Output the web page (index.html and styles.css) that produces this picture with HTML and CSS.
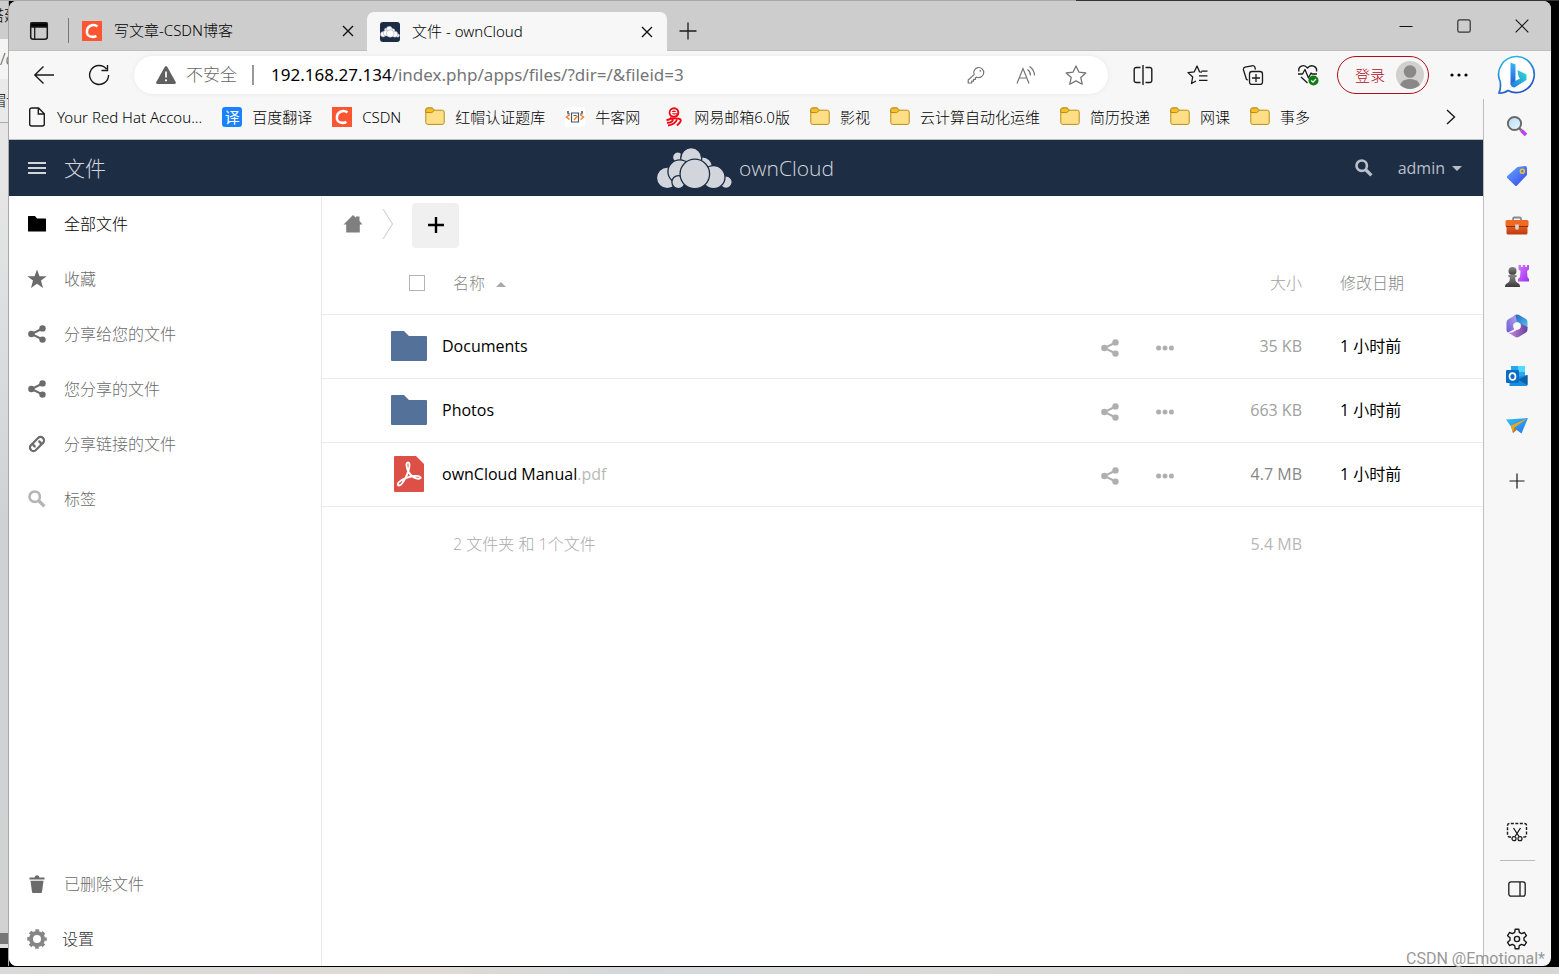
FILE: index.html
```html
<!DOCTYPE html>
<html lang="zh-CN">
<head>
<meta charset="utf-8">
<title>文件 - ownCloud</title>
<link rel="stylesheet" href="styles.css">
</head>
<body>
<svg class="defs" aria-hidden="true">
  <defs>
    <linearGradient id="g-bing-ring" x1="0" y1="0" x2="0.4" y2="1"><stop offset="0" stop-color="#2bc4ee"/><stop offset="1" stop-color="#2457c9"/></linearGradient>
    <linearGradient id="g-bing-a" x1="0" y1="0" x2="0" y2="1"><stop offset="0" stop-color="#3cb6f4"/><stop offset="1" stop-color="#1e5bd8"/></linearGradient>
    <linearGradient id="g-bing-b" x1="1" y1="0" x2="0" y2="1"><stop offset="0" stop-color="#2fe0d0"/><stop offset="1" stop-color="#1f74e6"/></linearGradient>
    <linearGradient id="g-lens" x1="0" y1="0" x2="1" y2="1"><stop offset="0" stop-color="#b9dcf5"/><stop offset="1" stop-color="#e6f6ff"/></linearGradient>
    <linearGradient id="g-tag" x1="0" y1="0" x2="1" y2="1"><stop offset="0" stop-color="#5fb0ff"/><stop offset="1" stop-color="#3b3df0"/></linearGradient>
    <linearGradient id="g-box" x1="0" y1="0" x2="0" y2="1"><stop offset="0" stop-color="#e85c1a"/><stop offset="1" stop-color="#b83a12"/></linearGradient>
    <linearGradient id="g-pawn" x1="0" y1="0" x2="0" y2="1"><stop offset="0" stop-color="#8a8a8a"/><stop offset="1" stop-color="#3a3a3a"/></linearGradient>
    <linearGradient id="g-rook" x1="0" y1="0" x2="1" y2="1"><stop offset="0" stop-color="#d67bff"/><stop offset="1" stop-color="#a02cf0"/></linearGradient>
    <linearGradient id="g-m1" x1="0" y1="1" x2="1" y2="0"><stop offset="0" stop-color="#6a5bd6"/><stop offset="1" stop-color="#b9a2ee"/></linearGradient>
    <linearGradient id="g-m2" x1="0" y1="0" x2="1" y2="1"><stop offset="0" stop-color="#1f5fc0"/><stop offset="1" stop-color="#55c6f2"/></linearGradient>
    <linearGradient id="g-m3" x1="0" y1="0" x2="1" y2="0"><stop offset="0" stop-color="#c58be0"/><stop offset="1" stop-color="#6b3f9c"/></linearGradient>
    <linearGradient id="g-drop" x1="0" y1="0" x2="1" y2="1"><stop offset="0" stop-color="#2ec5f2"/><stop offset="1" stop-color="#2a6ff0"/></linearGradient>
  </defs>
  <symbol id="i-folder" viewBox="0 0 20 20"><path d="M.8 4V15.500A2 2 0 0 0 2.800 17.400H17.200A2 2 0 0 0 19.200 15.500V5.200A2 2 0 0 0 17.200 3.200H9.200L7.800 1.500A1.500 1.500 0 0 0 6.800 1H2.600A1.800 1.800 0 0 0 .8 2.800Z" fill="#ffdf85" stroke="#b98c14"/><path d="M.8 5.500V2.800A1.800 1.800 0 0 1 2.600 1H6.800Q7.500 1 8 1.700L9.200 3.200L7.700 5Q7.300 5.600 6.500 5.600Z" fill="#f2c12e" stroke="#b98c14"/></symbol>
  <symbol id="i-csdn" viewBox="0 0 20 20"><path d="M0 0H20V20H0Z" fill="#fc5531"/><path d="M15.400 5.400C13.600 3.900 10.400 3.700 8 5C4.700 6.800 4 11.600 5.900 14C7.800 16.200 11.700 16.400 14.400 14.800" fill="none" stroke="#fff" stroke-width="2.600"/></symbol>
  <symbol id="i-cloud" viewBox="0 0 232 128"><g fill="#d2d6dc" stroke="#1d2d44" stroke-width="4"><circle cx="65" cy="31" r="16"/><circle cx="140" cy="61" r="31"/><circle cx="106" cy="34" r="32"/><circle cx="33" cy="94" r="33"/><circle cx="71" cy="75" r="36"/><circle cx="67" cy="107" r="20"/><circle cx="212" cy="107" r="19"/><circle cx="174" cy="92" r="35"/><circle cx="117" cy="82" r="45"/></g></symbol>
  <symbol id="i-cloud-small" viewBox="0 0 20 12"><g fill="#fff" stroke="#8d96a5" stroke-width=".5"><circle cx="6" cy="3.500" r="1.500"/><circle cx="12.500" cy="5" r="2.500"/><circle cx="9.300" cy="3.200" r="2.900"/><circle cx="3.200" cy="8.300" r="2.700"/><circle cx="6.300" cy="7" r="3"/><circle cx="17.800" cy="9.500" r="1.700"/><circle cx="14.800" cy="8.200" r="3"/><circle cx="10.200" cy="7.500" r="3.800"/></g></symbol>
  <symbol id="i-share" viewBox="0 0 18 18"><path d="M14.500 3.500L3.500 9L14.500 14.500" fill="none" stroke="currentColor" stroke-width="2"/><circle cx="3.400" cy="9" r="3.200" fill="currentColor"/><circle cx="14.500" cy="3.400" r="3.200" fill="currentColor"/><circle cx="14.500" cy="14.600" r="3.200" fill="currentColor"/></symbol>
  <symbol id="i-search" viewBox="0 0 18 18"><circle cx="6.700" cy="6.700" r="5.200" fill="none" stroke="currentColor" stroke-width="2.600"/><path d="M10.500 10.500L16.400 16.400" stroke="currentColor" stroke-width="3.300"/></symbol>
  <symbol id="i-dots" viewBox="0 0 18 6"><g fill="currentColor"><circle cx="2.600" cy="3" r="2.500"/><circle cx="9" cy="3" r="2.500"/><circle cx="15.400" cy="3" r="2.500"/></g></symbol>
  <symbol id="i-bigfolder" viewBox="0 0 36 30"><path d="M1 0H13L18 5H35Q36 5 36 6V29Q36 30 35 30H1Q0 30 0 29V1Q0 0 1 0Z" fill="#54719a"/></symbol>
</svg>

<div class="desktop">
  <div class="behind" aria-hidden="true">
    <div class="behind-tab">搭建</div>
    <div class="behind-url">/d</div>
    <div class="behind-marks">帽认</div>
    <div class="behind-page"></div>
    <div class="behind-bar"></div>
    <div class="behind-task"></div>
  </div>

  <div class="window">
    <header class="titlebar">
      <button class="tab-actions" aria-label="标签页操作"><svg width="20" height="20" viewBox="0 0 20 20"><rect x="1.700" y="1.700" width="16.600" height="16.600" rx="2.500" fill="none" stroke="#1a1a1a" stroke-width="1.500"/><path d="M2 2H18V6H2ZM5.700 6V18" stroke="#1a1a1a" stroke-width="1.300"/></svg></button>
      <div class="tab">
        <svg width="20" height="20"><use href="#i-csdn"/></svg>
        <span class="tab-title">写文章-CSDN博客</span>
        <button class="tab-close" aria-label="关闭"><svg width="12" height="12" viewBox="0 0 12 12"><path d="M1 1L11 11M11 1L1 11" stroke="#111" stroke-width="1.400"/></svg></button>
      </div>
      <div class="tab tab-active">
        <span class="oc-favicon"><svg width="20" height="12"><use href="#i-cloud-small"/></svg></span>
        <span class="tab-title">文件 - ownCloud</span>
        <button class="tab-close" aria-label="关闭"><svg width="12" height="12" viewBox="0 0 12 12"><path d="M1 1L11 11M11 1L1 11" stroke="#111" stroke-width="1.400"/></svg></button>
      </div>
      <button class="new-tab" aria-label="新建标签页"><svg width="18" height="18" viewBox="0 0 18 18"><path d="M9 .5V17.500M.5 9H17.500" stroke="#1a1a1a" stroke-width="1.300"/></svg></button>
      <div class="window-buttons">
        <button aria-label="最小化"><svg width="14" height="14" viewBox="0 0 14 14"><path d="M.5 7.500H13.500" stroke="#111"/></svg></button>
        <button aria-label="最大化"><svg width="14" height="14" viewBox="0 0 14 14"><rect x=".8" y=".8" width="12.400" height="12.400" rx="1.800" fill="none" stroke="#333" stroke-width="1.200"/></svg></button>
        <button aria-label="关闭窗口"><svg width="14" height="14" viewBox="0 0 14 14"><path d="M.7 .7L13.300 13.300M13.300 .7L.7 13.300" stroke="#111" stroke-width="1.100"/></svg></button>
      </div>
    </header>

    <div class="window-body">
      <div class="main-column">
        <div class="toolbar">
          <button class="tool nav" aria-label="后退"><svg width="22" height="20" viewBox="0 0 22 20"><path d="M21 10H2M10.500 1.500L1.800 10L10.500 18.500" fill="none" stroke="#1a1a1a" stroke-width="1.400"/></svg></button>
          <button class="tool nav" aria-label="刷新"><svg width="22" height="22" viewBox="0 0 22 22"><path d="M20.600 11A9.500 9.500 0 1 1 18.500 5M19.500 1V6.500H13.500" fill="none" stroke="#1a1a1a" stroke-width="1.400"/></svg></button>
          <form class="omnibox">
            <svg class="warn" width="20" height="18" viewBox="0 0 20 18"><path d="M8.700 .9Q10 -.7 11.300 .9L19.700 16Q20.200 18 18.500 18H1.500Q-.2 18 .3 16Z" fill="#606060"/><path d="M10 5.500V11.500" stroke="#fff" stroke-width="1.700"/><circle cx="10" cy="14.300" r="1.100" fill="#fff"/></svg>
            <span class="insecure">不安全</span>
            <span class="url-divider"></span>
            <span class="url"><b>192.168.27.134</b>/index.php/apps/files/?dir=/&amp;fileid=3</span>
            <button type="button" class="tool" aria-label="密码"><svg width="18" height="18" viewBox="0 0 18 18"><path d="M7.200 8.600A5 5 0 1 1 10 11.200L8.500 11.600V13.300H6.500V15.200H4.700V17H1.200V14Z" fill="none" stroke="#757575" stroke-width="1.200" stroke-linejoin="round"/><circle cx="13.300" cy="4.800" r=".9" fill="#757575"/></svg></button>
            <button type="button" class="tool" aria-label="朗读"><svg width="20" height="18" viewBox="0 0 20 18"><path d="M1 17.500L7 2.500L13 17.500M3.200 12H10.800M11.500 3.500A7 7 0 0 1 14.500 9.500M13.500 .5A11 11 0 0 1 18.500 9.500" fill="none" stroke="#757575" stroke-width="1.200"/></svg></button>
            <button type="button" class="tool" aria-label="收藏"><svg width="22" height="20" viewBox="0 0 22 20"><path d="M11 1L14 7.200L20.800 8L15.800 12.600L17.200 19.200L11 15.900L4.800 19.200L6.200 12.600L1.200 8L8 7.200Z" fill="none" stroke="#757575" stroke-width="1.300" stroke-linejoin="round"/></svg></button>
          </form>
          <button class="tool split" aria-label="拆分窗口"><svg width="20" height="20" viewBox="0 0 20 20"><path d="M7.500 2.500H3.500A2 2 0 0 0 1.200 4.700V15.300A2 2 0 0 0 3.500 17.500H7.500M12.500 2.500H16.500A2 2 0 0 1 18.800 4.700V15.300A2 2 0 0 1 16.500 17.500H12.500M10 0V20" fill="none" stroke="#1a1a1a" stroke-width="1.400"/></svg></button>
          <button class="tool wide" aria-label="收藏夹"><svg width="22" height="20" viewBox="0 0 22 20"><path d="M15 7.200L12.500 6.800L10 1L7.300 6.800L1 7.600L5.700 12L4.500 18.500L9 16M12 10.800H20.500M14.500 6.200H20.500M12 15.400H20.500" fill="none" stroke="#1a1a1a" stroke-width="1.300" stroke-linejoin="round"/></svg></button>
          <button class="tool wide" aria-label="集锦"><svg width="22" height="20" viewBox="0 0 22 20"><rect x="7.500" y="6.500" width="13" height="13" rx="2.500" fill="none" stroke="#1a1a1a" stroke-width="1.300"/><path d="M14 9V17M10 13H18M6 15L4.500 14.500L1.500 5Q1 3 3 2.200L10 .8Q12 .4 12.800 2L13.500 4.500" fill="none" stroke="#1a1a1a" stroke-width="1.300"/></svg></button>
          <button class="tool wide" aria-label="浏览器概要"><svg width="22" height="22" viewBox="0 0 22 22"><path d="M2 7.500C.5 2.500 7-.5 10.500 4C14-.5 20.500 2.500 19.500 7.500M1 10H5.500L8 5.500L11.500 14L14 9L15 10H20M4 13L10.500 19" fill="none" stroke="#1a1a1a" stroke-width="1.300" stroke-linejoin="round"/><circle cx="16.500" cy="16.500" r="5" fill="#107c10"/><path d="M14.200 16.500L16 18.200L19 15" fill="none" stroke="#fff" stroke-width="1.300"/></svg></button>
          <button class="login">登录<svg width="28" height="28" viewBox="0 0 28 28"><circle cx="14" cy="14" r="14" fill="#d2d0ce"/><circle cx="14" cy="10.500" r="6.300" fill="#8a8886"/><path d="M4 24Q6 18 14 18T24 24Q19 28 14 28T4 24Z" fill="#8a8886"/></svg></button>
          <button class="tool more" aria-label="设置及其他"><svg width="18" height="4" viewBox="0 0 18 4"><circle cx="2" cy="2" r="1.600"/><circle cx="9" cy="2" r="1.600"/><circle cx="16" cy="2" r="1.600"/></svg></button>
        </div>

        <nav class="bookmarks" aria-label="收藏夹栏">
          <a href="#"><svg width="20" height="20" viewBox="0 0 20 20"><path d="M4.500 1H11.500L17.300 6.800V17A2 2 0 0 1 15.300 19H4.700A2 2 0 0 1 2.700 17V3A2 2 0 0 1 4.700 1ZM11.300 1V7H17.300" fill="none" stroke="#1a1a1a" stroke-width="1.400"/></svg>Your Red Hat Accou...</a>
          <a href="#"><span class="fanyi">译</span>百度翻译</a>
          <a href="#"><svg width="20" height="20"><use href="#i-csdn"/></svg>CSDN&nbsp;</a>
          <a href="#"><svg width="20" height="20"><use href="#i-folder"/></svg>红帽认证题库</a>
          <a href="#"><svg width="20" height="20" viewBox="0 0 20 20"><rect width="20" height="20" rx="2" fill="#fff"/><path d="M6.500 6H13.500V15H6.500ZM3 4V7H5M17 4V7H15M2 5H4M16 5H18M8.500 8.500H11.500" fill="none" stroke="#4a5668" stroke-width="1.200"/><path d="M4.500 8L1.500 10L4.500 12.500M15.500 8L18.500 10L15.500 12.500M12.500 9L9 13" fill="none" stroke="#ff7a1a" stroke-width="1.500"/></svg>牛客网&nbsp;</a>
          <a href="#"><svg width="20" height="20" viewBox="0 0 20 20"><circle cx="10" cy="5.500" r="5.300" fill="#f00a14"/><path d="M7 5.700H12.800Q12.600 2.800 10 2.800T7 5.500Q7.200 8.200 10 8.200L12.300 7.500" fill="none" stroke="#fff" stroke-width="1.200"/><path d="M2.500 13Q6 13 7.500 10.500M6 11.700Q15 10.800 16.500 12.500T13 18.500M9 12.500Q8 16 3 15.800M13 12.500Q11 17.500 4 18.500" fill="none" stroke="#f00a14" stroke-width="1.900"/></svg>网易邮箱6.0版</a>
          <a href="#"><svg width="20" height="20"><use href="#i-folder"/></svg>影视</a>
          <a href="#"><svg width="20" height="20"><use href="#i-folder"/></svg>云计算自动化运维</a>
          <a href="#"><svg width="20" height="20"><use href="#i-folder"/></svg>简历投递</a>
          <a href="#"><svg width="20" height="20"><use href="#i-folder"/></svg>网课</a>
          <a href="#"><svg width="20" height="20"><use href="#i-folder"/></svg>事多</a>
          <button class="overflow" aria-label="更多收藏"><svg width="10" height="16" viewBox="0 0 10 16"><path d="M1 1L8.500 8L1 15" fill="none" stroke="#1a1a1a" stroke-width="1.400"/></svg></button>
        </nav>

        <div class="app">
          <header class="app-header">
            <button class="app-menu"><svg width="18" height="14" viewBox="0 0 18 14"><path d="M0 2H18M0 7H18M0 12H18" stroke="currentColor" stroke-width="2"/></svg>文件</button>
            <a class="brand" href="#"><svg width="77" height="42"><use href="#i-cloud"/></svg>ownCloud</a>
            <div class="app-user">
              <button aria-label="搜索"><svg width="18" height="18"><use href="#i-search"/></svg></button>
              <button>admin<svg width="10" height="5" viewBox="0 0 10 5"><path d="M0 0H10L5 5Z" fill="currentColor"/></svg></button>
            </div>
          </header>

          <div class="app-body">
            <nav class="side">
              <a class="current" href="#"><svg width="20" height="20" viewBox="0 0 20 20"><path d="M1.500 2H8L10 4.500H18.500Q19 4.500 19 5V17.500H1V2.500Z" fill="currentColor"/></svg>全部文件</a>
              <a href="#"><svg width="20" height="20" viewBox="0 0 20 20"><path d="M10 .5L12.500 7.200H19.700L14 11.600L16 19L10 14.800L4 19L6 11.600L.3 7.200H7.500Z" fill="currentColor"/></svg>收藏</a>
              <a href="#"><svg width="20" height="18"><use href="#i-share"/></svg>分享给您的文件</a>
              <a href="#"><svg width="20" height="18"><use href="#i-share"/></svg>您分享的文件</a>
              <a href="#"><svg width="20" height="20" viewBox="0 0 20 20"><g transform="rotate(-45 10 10)" fill="none" stroke="currentColor" stroke-width="2.200"><path d="M8 6.500H15A3.500 3.500 0 0 1 15 13.500H12M8 6.500A3.500 3.500 0 0 0 7 11"/><path d="M12 13.500H5A3.500 3.500 0 0 1 5 6.500H8M12 13.500A3.500 3.500 0 0 0 13 9" /></g></svg>分享链接的文件</a>
              <a href="#"><svg class="faint" width="20" height="18"><use href="#i-search"/></svg>标签</a>
              <a class="trash" href="#"><svg width="20" height="20" viewBox="0 0 20 20"><path d="M2.500 3.500H7.500Q8 1.200 10 1.200T12.500 3.500H17.500V5.500H2.500ZM3.500 6.800H16.500L15 18Q14.900 19 14 19H6Q5.100 19 5 18Z" fill="currentColor"/></svg>已删除文件</a>
              <button class="settings"><svg width="20" height="20" viewBox="0 0 20 20"><circle cx="10" cy="10" r="6" fill="none" stroke="#858585" stroke-width="4"/><circle cx="10" cy="10" r="8.600" fill="none" stroke="#858585" stroke-width="2.400" stroke-dasharray="3.700 3.054" stroke-dashoffset="1.850"/></svg>设置</button>
            </nav>

            <main class="files">
              <div class="crumbs">
                <a href="#" aria-label="主页"><svg width="20" height="18" viewBox="0 0 20 18"><path d="M10 0L13 2.700V1.500H16.500V6L19.500 9.500H16.800V17.500H3.200V9.500H.5Z" fill="#7f7f7f"/></svg></a>
                <svg class="chevron" width="12" height="32" viewBox="0 0 12 32"><path d="M1 1L10.500 16L1 31" fill="none" stroke="#d4d4d4" stroke-width="1.200"/></svg>
                <button class="add" aria-label="新建"><svg width="16" height="16" viewBox="0 0 16 16"><path d="M8 0V16M0 8H16" stroke="#000" stroke-width="2.400"/></svg></button>
              </div>
              <table>
                <colgroup><col class="c-icon"><col><col class="c-act"><col class="c-act"><col class="c-size"><col class="c-date"></colgroup>
                <thead>
                  <tr><th class="t-check"><input type="checkbox" aria-label="全选"></th><th class="t-name">名称<svg width="10" height="5" viewBox="0 0 10 5"><path d="M0 5H10L5 0Z" fill="#aaa"/></svg></th><th></th><th></th><th class="t-size">大小</th><th class="t-date">修改日期</th></tr>
                </thead>
                <tbody>
                  <tr><td class="t-icon"><svg width="36" height="30"><use href="#i-bigfolder"/></svg></td><td><a href="#">Documents</a></td><td class="t-act"><button aria-label="分享"><svg width="18" height="18"><use href="#i-share"/></svg></button></td><td class="t-act"><button aria-label="更多"><svg width="18" height="6"><use href="#i-dots"/></svg></button></td><td class="t-size">35 KB</td><td class="t-date">1 小时前</td></tr>
                  <tr><td class="t-icon"><svg width="36" height="30"><use href="#i-bigfolder"/></svg></td><td><a href="#">Photos</a></td><td class="t-act"><button aria-label="分享"><svg width="18" height="18"><use href="#i-share"/></svg></button></td><td class="t-act"><button aria-label="更多"><svg width="18" height="6"><use href="#i-dots"/></svg></button></td><td class="t-size">663 KB</td><td class="t-date">1 小时前</td></tr>
                  <tr><td class="t-icon"><svg width="36" height="36" viewBox="0 0 36 36"><path d="M4 0H25L33 8V35Q33 36 32 36H4Q3 36 3 35V1Q3 0 4 0Z" fill="#dc5047"/><path d="M17 6.500C14.500 6.500 15.600 12 17.300 15.500C20 21 25.500 23.200 28.500 22.600C31.500 21.500 28.500 19.500 23.500 20C18 20.500 10.500 23 7.500 26.500C5.500 29.500 8.500 31 11 27.500C14.500 22.500 17.500 16 18.300 11C18.700 8 18.500 6.500 17 6.500Z" fill="none" stroke="#fff" stroke-width="1.900"/></svg></td><td><a href="#">ownCloud Manual<span class="ext">.pdf</span></a></td><td class="t-act"><button aria-label="分享"><svg width="18" height="18"><use href="#i-share"/></svg></button></td><td class="t-act"><button aria-label="更多"><svg width="18" height="6"><use href="#i-dots"/></svg></button></td><td class="t-size dark">4.7 MB</td><td class="t-date">1 小时前</td></tr>
                </tbody>
                <tfoot>
                  <tr><td></td><td class="t-name">2 文件夹 和 1个文件</td><td></td><td></td><td class="t-size total">5.4 MB</td><td></td></tr>
                </tfoot>
              </table>
            </main>
          </div>
        </div>
      </div>

      <aside class="edge-side">
        <button class="bing" aria-label="必应"><svg width="40" height="40" viewBox="0 0 40 40"><path d="M20 1.500A18 18 0 1 1 11 35.500Q7 38.700 2 38Q4 34 3.300 27A18 18 0 0 1 20 1.500Z" fill="#fff" stroke="url(#g-bing-ring)" stroke-width="1.700"/><path d="M13.500 7.500L18.500 9.500V27L13.500 30Z" fill="url(#g-bing-a)"/><path d="M20.500 15L29.500 19.500V25L17.500 32.500Q14 32.500 13.500 28.500L23 23.500L21.500 21.500Z" fill="url(#g-bing-b)"/></svg></button>
        <div class="rail">
          <button aria-label="搜索"><svg width="22" height="22" viewBox="0 0 22 22"><path d="M13 13L15.500 15.500" stroke="#777" stroke-width="2.500"/><path d="M15.500 15.500L20 20" stroke="#c43cf0" stroke-width="3.600"/><circle cx="8.500" cy="8.500" r="6.600" fill="url(#g-lens)" stroke="#6a6a6a" stroke-width="2"/></svg></button>
          <button aria-label="购物"><svg width="22" height="22" viewBox="0 0 22 22"><path d="M11.500 2L19 1Q21 1 21 3L21 10L11 20.500Q10 21.500 9 20.500L1.200 13Q.5 12 1.300 11Z" fill="url(#g-tag)"/><circle cx="16.300" cy="6.300" r="2" fill="#5a70e8" stroke="#f3c623" stroke-width="1.500"/></svg></button>
          <button aria-label="工具"><svg width="24" height="20" viewBox="0 0 24 20"><path d="M8 5V3Q8 1.500 9.500 1.500H14.500Q16 1.500 16 3V5" fill="none" stroke="#8a8a8a" stroke-width="1.800"/><rect x=".5" y="4" width="23" height="7" rx="1.500" fill="#ee6a22"/><path d="M1.500 10.500H22.500V17Q22.500 18.500 21 18.500H3Q1.500 18.500 1.500 17Z" fill="url(#g-box)"/><path d="M1 10.500H23" stroke="#8f2d10"/><path d="M10.200 8.500H13.800V12Q13.800 13.800 12 13.800T10.200 12Z" fill="#d6d6d6"/></svg></button>
          <button aria-label="游戏"><svg width="24" height="24" viewBox="0 0 24 24"><path d="M13.500 1H16V3H17.700V1H20.300V3H22V1H24V5.500L22 7L22.500 13L24 15V17.500H13V15L15 13L15.500 7L13.500 5.500Z" fill="url(#g-rook)"/><circle cx="7.500" cy="7" r="4" fill="url(#g-pawn)"/><path d="M3 11.500Q7.500 9.500 12 11.500Q12 13 10 13.500Q10 17 12 18.500Q15.500 20 15 23H0Q-.3 20 3.300 18.500Q5 17 5 13.500Q3 13 3 11.500Z" fill="url(#g-pawn)"/></svg></button>
          <button aria-label="Microsoft 365"><svg width="22" height="24" viewBox="0 0 22 24"><path d="M9 1Q11 0 13 1L20 5Q21.500 6 21.500 8V14L14.500 10L11 8.300L7.500 10.500V3Z" fill="url(#g-m2)"/><path d="M9.500 1L2 5.500Q.5 6.500 .5 8.500V16Q.5 17.500 2 18.500L8 15.500L7.500 10L11 8Z" fill="url(#g-m1)"/><path d="M21.500 13V15.500Q21.500 17.500 20 18.500L13 22.800Q11 24 9 22.800L2 18.500Q6 19.500 9 17L14.500 13.500L14.500 9.500Z" fill="url(#g-m3)"/><circle cx="11" cy="12" r="3.700" fill="#f7f7f7"/></svg></button>
          <button aria-label="Outlook"><svg width="22" height="22" viewBox="0 0 22 22"><path d="M5 1H19V12H5Z" fill="#28a8ea"/><path d="M12 1H19V7H12Z" fill="#50d9ff"/><path d="M5 7H12V12H5Z" fill="#0364b8"/><path d="M3.500 21V13L21.500 10V19.500Q21.500 21 20 21Z" fill="#1490df"/><path d="M21.500 10V20L12 14.500Z" fill="#0f5ea8"/><rect x="0" y="5" width="13" height="13" rx="1.200" fill="#0b6cc4"/><ellipse cx="6.500" cy="11.500" rx="3" ry="3.400" fill="none" stroke="#fff" stroke-width="1.700"/></svg></button>
          <button aria-label="Drop"><svg width="22" height="18" viewBox="0 0 22 18"><path d="M0 2.500L22 1L15.500 16.500L10 12.500L7 16L5 9.500Z" fill="url(#g-drop)"/><path d="M5 8.500L22 1L8.500 10.500L7 16Z" fill="#f2a51c"/><path d="M7 16L8.500 10.500L11 12.800Z" fill="#c97708"/></svg></button>
          <button class="rail-add" aria-label="添加"><svg width="16" height="16" viewBox="0 0 16 16"><path d="M8 .5V15.500M.5 8H15.500" stroke="#1a1a1a" stroke-width="1.200"/></svg></button>
          <span class="rail-space"></span>
          <button aria-label="截图"><svg width="22" height="20" viewBox="0 0 22 20"><path d="M5 15H3.500A2 2 0 0 1 1.500 13V3.500A2 2 0 0 1 3.500 1.500H18.500A2 2 0 0 1 20.500 3.500V13A2 2 0 0 1 18.500 15H17" fill="none" stroke="#1a1a1a" stroke-width="1.400" stroke-dasharray="3 1.500"/><path d="M7.500 6L13 14.500M14.500 6L9 14.500" stroke="#1a1a1a" stroke-width="1.300"/><circle cx="8" cy="16.700" r="2" fill="none" stroke="#1a1a1a" stroke-width="1.200"/><circle cx="14" cy="16.700" r="2" fill="none" stroke="#1a1a1a" stroke-width="1.200"/></svg></button>
          <hr>
          <button aria-label="侧栏"><svg width="18" height="16" viewBox="0 0 18 16"><rect x=".8" y=".8" width="16.400" height="14.400" rx="2.200" fill="none" stroke="#1a1a1a" stroke-width="1.300"/><path d="M12 1V15" stroke="#1a1a1a" stroke-width="1.300"/></svg></button>
          <button aria-label="设置"><svg width="22" height="22" viewBox="0 0 22 22"><path d="M8.700 4.300L9.200 1.200H12.800L13.300 4.300L15.600 5.600L18.500 4.500L20.400 7.700L18 9.700V12.300L20.400 14.300L18.500 17.500L15.600 16.400L13.300 17.700L12.800 20.800H9.200L8.700 17.700L6.400 16.400L3.500 17.500L1.600 14.300L4 12.300V9.700L1.600 7.700L3.500 4.500L6.400 5.600Z" fill="none" stroke="#1a1a1a" stroke-width="1.400" stroke-linejoin="round"/><circle cx="11" cy="11" r="2.600" fill="none" stroke="#1a1a1a" stroke-width="1.400"/></svg></button>
        </div>
      </aside>
    </div>
  </div>
</div>
<div class="taskbar-edge"></div>
<div class="watermark">CSDN @Emotional*</div>
</body>
</html>
```
FILE: styles.css
```css
* { box-sizing: border-box; }

body {
  margin: 0;
  min-height: 100vh;
  display: flex;
  flex-direction: column;
  position: relative;
  background: #000;
  color: #000;
  font: 300 15px/20px "Noto Sans", "Noto Sans CJK SC", sans-serif;
}

button {
  border: 0;
  padding: 0;
  background: none;
  color: inherit;
  font: inherit;
  display: flex;
  align-items: center;
  justify-content: center;
}

a { color: inherit; text-decoration: none; }
svg { display: block; flex: none; }
.defs { position: absolute; width: 0; height: 0; }

.desktop {
  flex: 1;
  display: flex;
  padding: 1px 8px 1px 0;
  background: #000 linear-gradient(90deg, #a9a9a9 69%, #333 69%) top / 100% 1px no-repeat;
}

/* slice of the window that lies underneath */
.behind {
  width: 9px;
  display: flex;
  flex-direction: column;
  overflow: hidden;
  white-space: nowrap;
  background: #e2e3e4;
  border-right: 1px solid #a8a8a8;
}
.behind-tab { height: 38px; padding-top: 4px; background: #cdcdcd; text-indent: -11px; }
.behind-url { height: 40px; padding-top: 10px; background: #f4f4f4; color: #555; font-size: 16px; }
.behind-marks { height: 44px; padding-top: 11px; background: #e9e9e9; text-indent: -9px; border-bottom: 1px solid #aaa; }
.behind-page { flex: 1; background: linear-gradient(#e6e6e6 60px, #cfd2d4 400px, #d2d2d2); }
.behind-bar { height: 15px; background: #777; border-bottom: 4px solid #ddd; }
.behind-task { height: 18px; background: #000; }

.window {
  flex: 1;
  min-width: 0;
  display: flex;
  flex-direction: column;
  background: #f7f7f7;
  border-radius: 8px;
  overflow: hidden;
}

.titlebar {
  display: flex;
  align-items: flex-end;
  height: 50px;
  background: #cdcdcd;
  border-bottom: 1px solid #bebebe;
}
.tab-actions { width: 60px; height: 25px; margin-bottom: 7px; border-right: 1px solid #777; }
.tab { display: flex; align-items: center; width: 298px; height: 39px; padding: 0 12px 0 13px; gap: 12px; }
.tab-active { width: 300px; padding-right: 13px; margin-bottom: -1px; background: #f7f7f7; border-radius: 7px 7px 0 0; }
.tab-title { flex: 1; padding-bottom: 2px; }
.tab-close, .new-tab { height: 39px; }
.tab-close { width: 14px; }
.new-tab { width: 42px; }
.oc-favicon { display: flex; align-items: center; justify-content: center; width: 20px; height: 20px; background: #1d2d44; border-radius: 3px; }
.window-buttons { margin-left: auto; display: flex; }
.window-buttons button { width: 58px; height: 49px; }

.window-body { flex: 1; display: flex; }
.main-column { flex: 1; min-width: 0; display: flex; flex-direction: column; }

.toolbar { display: flex; align-items: center; height: 48px; padding-left: 7px; }
.tool { width: 50px; height: 38px; }
.nav, .wide { width: 55px; }
.split { width: 55px; margin-left: 7px; }
.more { width: 48px; margin-left: 6px; }
.omnibox {
  flex: 1;
  min-width: 0;
  display: flex;
  align-items: center;
  height: 38px;
  margin-left: 8px;
  padding: 0 7px 0 22px;
  background: #fff;
  border-radius: 19px;
  box-shadow: 0 0 4px #e6e6e6;
}
.insecure { margin-left: 10px; font-size: 17px; color: #666; }
.url-divider { width: 2px; height: 20px; margin: 0 17px 0 15px; background: #999; }
.url { flex: 1; font: 400 17px/24px "Noto Sans", sans-serif; color: #757575; white-space: nowrap; overflow: hidden; }
.url b { font-weight: 400; color: #000; }
.login {
  width: 92px;
  height: 38px;
  margin-left: 2px;
  gap: 11px;
  padding-left: 13px;
  color: #b10e1c;
  border: 1px solid #b10e1c;
  border-radius: 19px;
}

.bookmarks {
  display: flex;
  align-items: center;
  gap: 20px;
  height: 41px;
  padding: 0 27px 5px 18px;
  border-bottom: 1px solid #bebebe;
  white-space: nowrap;
}
.bookmarks a { display: flex; align-items: center; gap: 10px; }
.overflow { margin-left: auto; }
.fanyi { width: 20px; height: 20px; border-radius: 3px; background: #1a82ff; color: #fff; text-align: center; font-weight: 400; }

.app { flex: 1; display: flex; flex-direction: column; background: #fff; font: 300 16px/24px "Open Sans", "Noto Sans CJK SC", sans-serif; }
.app-header {
  display: grid;
  grid-template-columns: 1fr auto 1fr;
  align-items: center;
  height: 56px;
  padding: 0 21px 0 19px;
  background: #1d2d44;
  color: #d2d6dc;
}
.app-menu { justify-self: start; gap: 18px; font-size: 21px; }
.brand { display: flex; align-items: center; gap: 6px; font-size: 21px; }
.app-user { justify-self: end; display: flex; gap: 25px; color: #b9bfc8; font-weight: 400; }
.app-user button { gap: 7px; }

.app-body { flex: 1; display: flex; }
.side { width: 313px; display: flex; flex-direction: column; border-right: 1px solid #ebebeb; color: #6b6b6b; }
.side a, .settings { display: flex; align-items: center; justify-content: flex-start; gap: 17px; height: 55px; padding-left: 18px; }
.side .current { color: #000; }
.side .trash { margin-top: auto; }
.settings { gap: 15px; color: #333; }
.faint { color: #b5b5b5; }

.files { flex: 1; min-width: 0; }
.crumbs { display: flex; align-items: center; height: 56px; padding-left: 21px; }
.chevron { margin: 0 18px 0 19px; }
.add { width: 47px; height: 45px; margin-top: 2px; background: #f0f0f0; border-radius: 4px; }

table { width: 100%; table-layout: fixed; border-collapse: collapse; }
.c-icon { width: 120px; }
.c-act { width: 55px; }
.c-size { width: 110px; }
.c-date { width: 181px; }
th, td { height: 64px; padding: 0; text-align: left; font-weight: 400; border-bottom: 1px solid #ebebeb; }
th { height: 62px; font-weight: 300; color: #888; }
.t-check { padding-left: 87px; }
.t-check input { display: block; appearance: none; width: 16px; height: 16px; margin: 0; border: 1px solid #b4b4b4; }
.t-name { padding-left: 11px; }
.t-name svg { display: inline-block; margin-left: 11px; vertical-align: 2px; }
.t-icon { padding-left: 69px; }
.t-act { padding-top: 3px; }
.t-act button { width: 55px; color: #afafaf; }
.t-size { text-align: right; color: #a0a0a0; }
.dark { color: #868686; }
.t-date { padding-left: 38px; }
.ext { color: #b8b8b8; }
tfoot td { height: 76px; border: 0; color: #aaa; font-weight: 300; }
tfoot .total { font-weight: 400; color: #b8b8b8; }

.edge-side { width: 68px; display: flex; flex-direction: column; }
.bing { height: 48px; }
.rail { flex: 1; display: flex; flex-direction: column; align-items: center; padding: 2px 1px 2px 0; border-left: 1px solid #bdbdbd; }
.rail button { width: 50px; height: 50px; }
.rail .rail-add { height: 60px; }
.rail-space { flex: 1; }
.rail hr { width: 35px; height: 1px; margin: 3px 0; border: 0; background: #bbb; }

.taskbar-edge { height: 7px; background: linear-gradient(90deg, #d9dad9, #dfdad4 28%, #d4d8da 40%, #dadad8 60%, #d6d6d6); }
.watermark {
  position: absolute;
  right: 14px;
  bottom: 5px;
  font: 16px/20px Roboto, sans-serif;
  color: #999;
}
```
